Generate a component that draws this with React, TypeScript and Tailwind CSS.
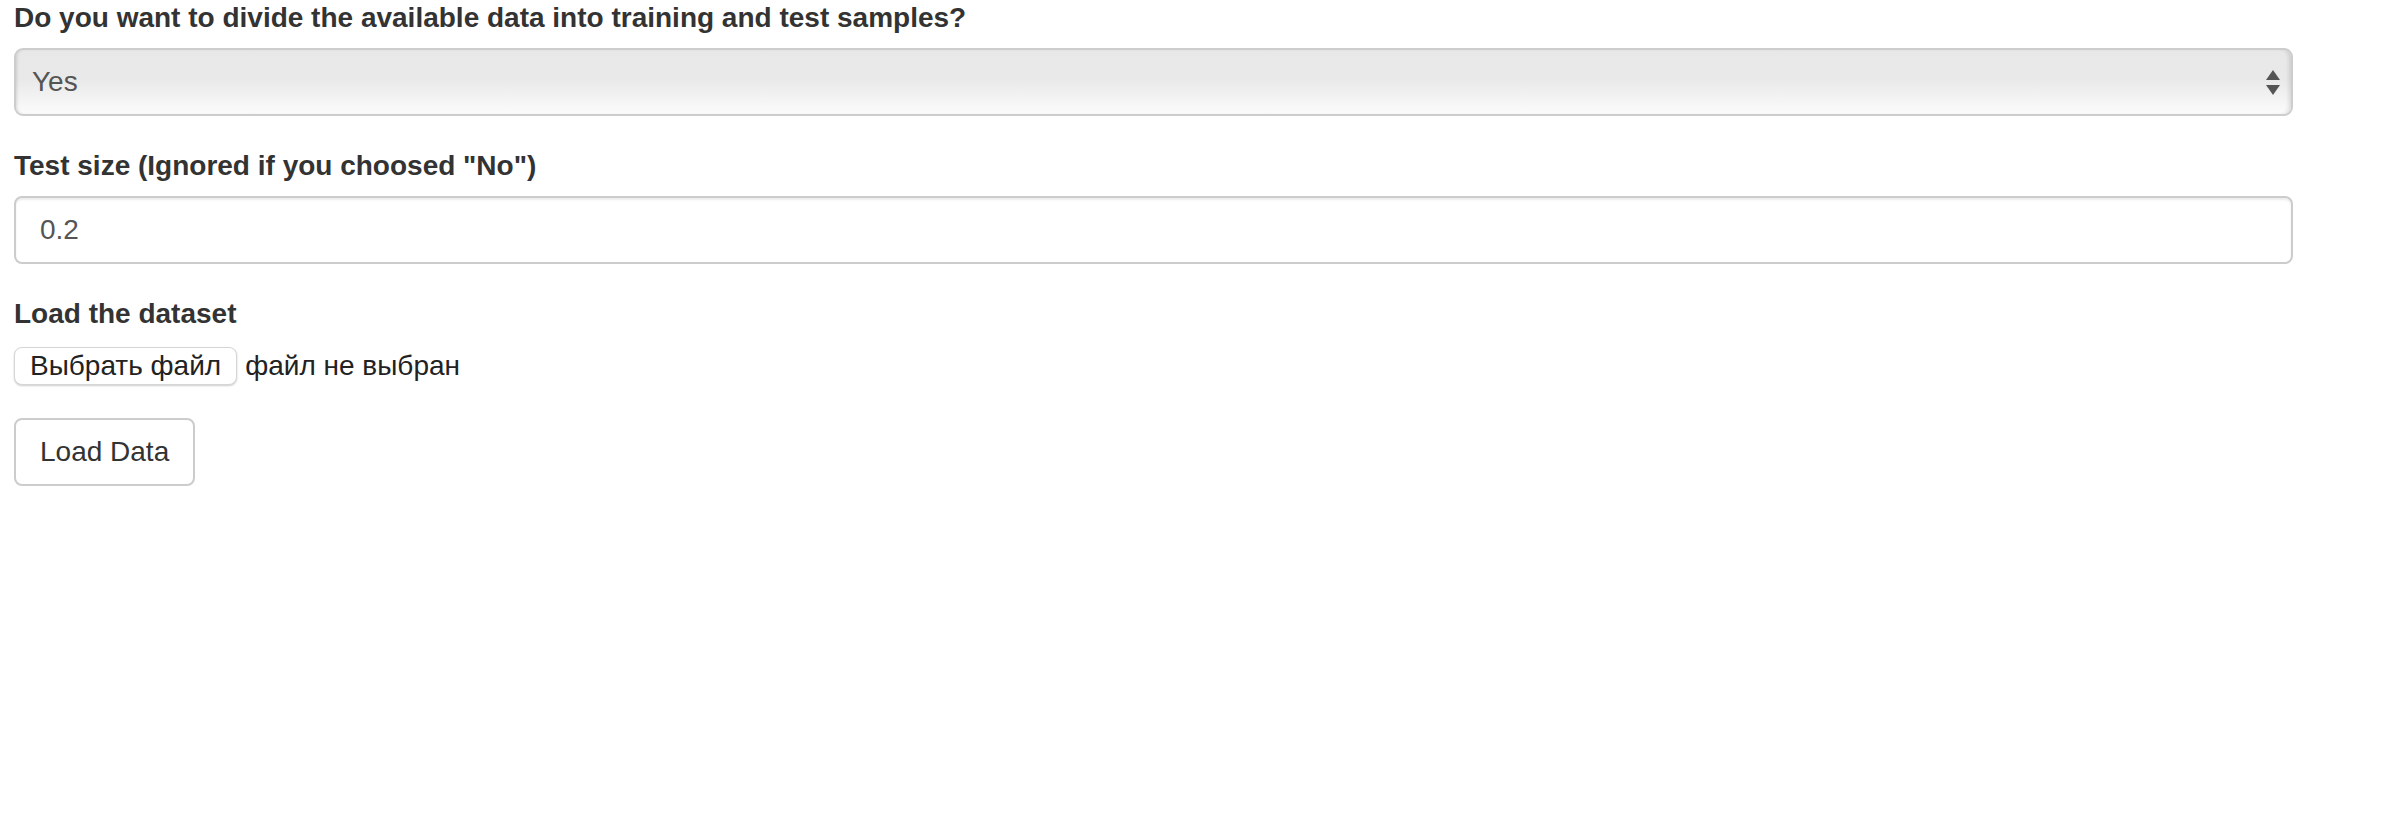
import React from 'react';

const font = { fontFamily: '"Liberation Sans", Arial, sans-serif' };

function Field({ label, children }: { label: string; children: React.ReactNode }) {
  return (
    <div className="mb-[30px]">
      <label className="mb-[10px] inline-block text-[28px] font-bold leading-[40px] text-[#333]">{label}</label>
      {children}
    </div>
  );
}

export default function App() {
  return (
    <div className="min-h-screen bg-white pl-[14px] text-[#333]" style={font}>
      <div className="-mt-[2px] w-[2279px]">
        <Field label="Do you want to divide the available data into training and test samples?">
          <div className="relative h-[68px] rounded-[9px] border-2 border-[#cdcdcd] bg-[linear-gradient(to_bottom,#e8e8e8_0%,#e9e9e9_45%,#fbfbfb_100%)] shadow-[inset_3px_0_3px_-2px_rgba(0,0,0,0.12),inset_-4px_0_4px_-2px_rgba(0,0,0,0.12)]">
            <select
              className="h-full w-full appearance-none bg-transparent pl-[16px] text-[28px] leading-[40px] text-[#555] outline-none"
              style={font}
              defaultValue="Yes"
            >
              <option>Yes</option>
              <option>No</option>
            </select>
            {/* up/down arrows */}
            <svg className="pointer-events-none absolute right-[11px] top-[20px]" width="14" height="26" viewBox="0 0 14 26">
              <path d="M7 0 L14 10 L0 10 Z" fill="#555" />
              <path d="M0 15 L14 15 L7 25 Z" fill="#555" />
            </svg>
          </div>
        </Field>

        <Field label={'Test size (Ignored if you choosed "No")'}>
          <input
            className="block h-[68px] w-full rounded-[8px] border-2 border-[#ccc] bg-white px-[24px] py-[12px] text-[28px] leading-[40px] text-[#555] shadow-[inset_0_2px_2px_rgba(0,0,0,0.075)] outline-none"
            style={font}
            defaultValue="0.2"
          />
        </Field>

        <Field label="Load the dataset">
          <div className="flex h-[44px] items-center gap-[8px] text-[28px] text-[#222]">
            <div className="flex h-[38px] items-center rounded-[8px] border border-[#d6d6d6] bg-white px-[15px] shadow-[0_1px_2px_rgba(0,0,0,0.2)]">
              Выбрать файл
            </div>
            <span>файл не выбран</span>
          </div>
        </Field>

        <button
          className="h-[68px] rounded-[8px] border-2 border-[#ccc] bg-white px-[24px] text-[28px] leading-[40px] text-[#333]"
          style={font}
        >
          Load Data
        </button>
      </div>
    </div>
  );
}
